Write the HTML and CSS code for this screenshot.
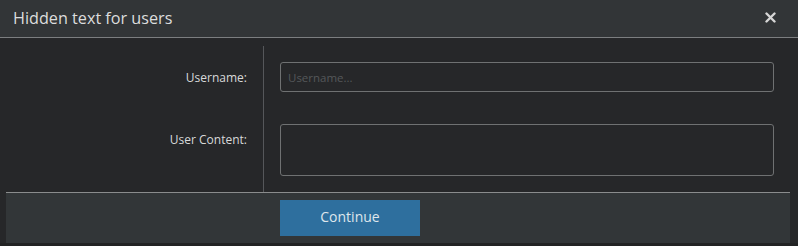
FILE: index.html
```html
<!DOCTYPE html>
<html lang="en">
<head>
    <meta charset="UTF-8">
    <meta name="viewport" content="width=device-width, initial-scale=1.0">
    <title>Hidden text for users</title>
    <link rel="stylesheet" href="styles.css">
</head>
<body>
    <div class="dialog">
        <div class="dialog-header">
            <h1>Hidden text for users</h1>
            <button class="close-btn" aria-label="Close">
                <svg width="11" height="11" viewBox="0 0 11 11">
                    <path d="M1.5 1.5 L9.5 9.5 M9.5 1.5 L1.5 9.5" stroke="#d6d6d6" stroke-width="2.4" stroke-linecap="round"/>
                </svg>
            </button>
        </div>

        <div class="dialog-body">
            <div class="form">
                <div class="labels">
                    <label class="row-label row-single" for="username">Username:</label>
                    <label class="row-label row-multi" for="content">User Content:</label>
                </div>
                <div class="fields">
                    <input id="username" class="field-input" type="text" placeholder="Username...">
                    <textarea id="content" class="field-area"></textarea>
                </div>
            </div>

            <div class="dialog-footer">
                <button class="continue-btn">Continue</button>
            </div>
        </div>
    </div>
</body>
</html>
```

FILE: styles.css
```css
* {
    margin: 0;
    padding: 0;
    box-sizing: border-box;
}

body {
    font-family: 'Open Sans', 'Noto Sans', sans-serif;
    background: #222324;
    width: 798px;
    height: 246px;
    overflow: hidden;
}

.dialog {
    background: #262729;
}

.dialog-header {
    height: 38px;
    background: #323537;
    border-bottom: 1px solid #7c7e80;
    display: flex;
    align-items: center;
    justify-content: space-between;
    padding: 0 22px 0 13px;
}

.dialog-header h1 {
    font-size: 16.2px;
    font-weight: 400;
    color: #dcdddd;
    margin-top: -1px;
}

.close-btn {
    background: none;
    border: none;
    display: flex;
    cursor: pointer;
    margin-top: -3px;
}

.dialog-body {
    padding-top: 8px;
}

.form {
    display: grid;
    grid-template-columns: 264px 1fr;
}

.labels {
    border-right: 1px solid #55575a;
    padding: 16px 16px 16px 0;
    display: flex;
    flex-direction: column;
    align-items: flex-end;
}

.row-label {
    font-size: 12px;
    color: #d8d9d9;
    line-height: 31px;
}

.row-single {
    height: 30px;
}

.row-multi {
    margin-top: 32px;
    height: 52px;
}

.fields {
    padding: 16px 24px 16px 16px;
    display: flex;
    flex-direction: column;
}

.field-input,
.field-area {
    background: #262729;
    border: 1px solid #6f7172;
    border-radius: 3px;
    color: #d8d9d9;
    font-family: inherit;
    font-size: 11.5px;
    padding: 0 7px;
    outline: none;
}

.field-input {
    height: 30px;
}

.field-input::placeholder {
    color: #55585a;
}

.field-area {
    margin-top: 32px;
    height: 52px;
    resize: none;
}

.dialog-footer {
    margin: 0 8px 0 6px;
    height: 51px;
    background: #323638;
    border-top: 1px solid #8a8c8d;
    padding: 7px 0 0 274px;
}

.continue-btn {
    width: 140px;
    height: 36px;
    background: #2e6f9e;
    color: #dfe6ec;
    border: none;
    font-family: inherit;
    font-size: 14px;
    padding-bottom: 3px;
    cursor: pointer;
}
```
